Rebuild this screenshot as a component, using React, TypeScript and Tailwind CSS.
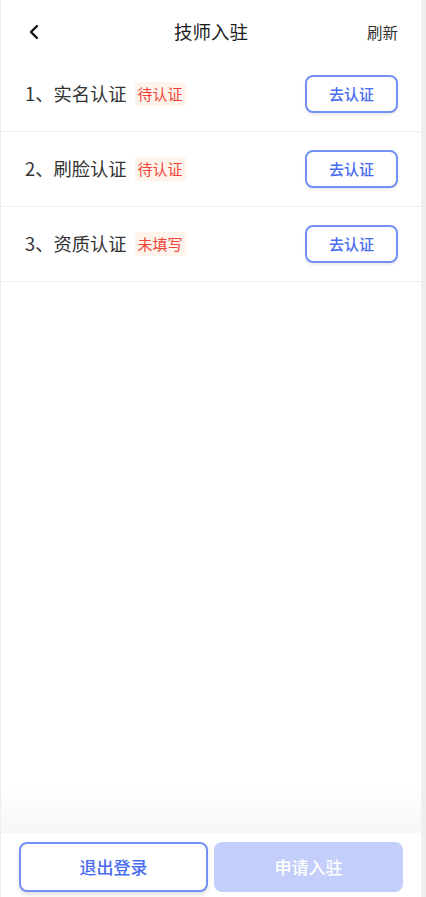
import React from "react";

const rows = [
  { n: "1、实名认证", s: "待认证" },
  { n: "2、刷脸认证", s: "待认证" },
  { n: "3、资质认证", s: "未填写" },
];

export default function App() {
  return (
    <div
      className="flex h-[897px] w-[426px] bg-[#efefef] overflow-hidden"
      style={{ fontFamily: '"Noto Sans CJK SC", "Noto Sans", sans-serif' }}
    >
      <div className="ml-px flex w-[420px] flex-col bg-white">
        <div className="relative flex h-[57px] shrink-0 items-center justify-center">
          <svg
            className="absolute left-[26px] top-[24px]"
            width="14"
            height="16"
            viewBox="0 0 14 16"
            fill="none"
          >
            <path d="M10 2 L4 8 L10 14" stroke="#111" strokeWidth="2.4" strokeLinecap="round" strokeLinejoin="round" />
          </svg>
          <div className="mt-[7px] text-[18.5px] font-normal text-[#1a1a1a]">技师入驻</div>
          <div className="absolute right-[23px] top-[21px] text-[15.5px] text-[#333]">刷新</div>
        </div>
        <div className="flex flex-col">
          {rows.map((r, i) => (
            <div
              key={i}
              className="flex h-[75px] items-center justify-between border-b border-[#efefef] pl-[24px] pr-[23px]"
            >
              <div className="flex items-center gap-[8px]">
                <span className="text-[18.3px] font-normal text-[#333]">{r.n}</span>
                <span className="rounded-[3px] bg-[#fff4ec] px-[3px] py-[2px] text-[15px] leading-[20px] text-[#f04438]">
                  {r.s}
                </span>
              </div>
              <button className="flex h-[38px] w-[93px] items-center justify-center rounded-[8px] border-2 border-[#7390f5] bg-white text-[15px] font-medium text-[#4a6cf0] shadow-[0_2px_3px_rgba(0,0,0,0.08)]">
                去认证
              </button>
            </div>
          ))}
        </div>
        <div className="flex-1 bg-gradient-to-b from-white from-[92%] to-[#f6f6f6]" />
        <div className="flex h-[64px] shrink-0 gap-[6px] bg-white px-[18px] pt-[9px]">
          <button className="flex h-[50px] w-[189px] items-center justify-center rounded-[8px] border-2 border-[#7390f5] bg-white text-[17px] font-medium text-[#4a6cf0] shadow-[0_3px_4px_rgba(0,0,0,0.12)]">
            退出登录
          </button>
          <button className="flex h-[50px] w-[189px] items-center justify-center rounded-[8px] bg-[#c3cffa] text-[17px] font-medium text-white">
            申请入驻
          </button>
        </div>
      </div>
    </div>
  );
}
